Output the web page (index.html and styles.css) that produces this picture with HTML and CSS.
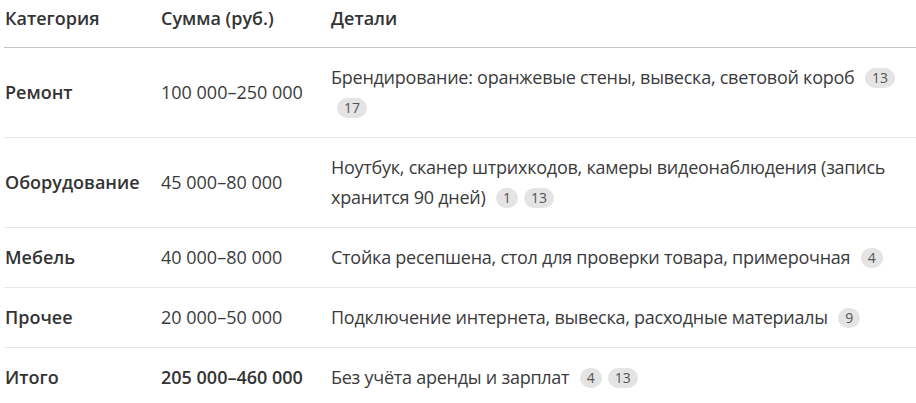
FILE: index.html
```html
<!DOCTYPE html>
<html lang="ru">
<head>
<meta charset="utf-8">
<link rel="stylesheet" href="styles.css">
</head>
<body>
<table class="budget">
  <colgroup>
    <col class="c-cat"><col class="c-sum"><col class="c-det">
  </colgroup>
  <thead>
    <tr><th>Категория</th><th>Сумма (руб.)</th><th>Детали</th></tr>
  </thead>
  <tbody>
    <tr>
      <td class="cat">Ремонт</td>
      <td>100 000–250 000</td>
      <td class="det">Брендирование: оранжевые стены, вывеска, световой короб <span class="ref">13</span> <span class="ref">17</span></td>
    </tr>
    <tr>
      <td class="cat">Оборудование</td>
      <td>45 000–80 000</td>
      <td class="det">Ноутбук, сканер штрихкодов, камеры видеонаблюдения (запись хранится 90 дней) <span class="ref">1</span><span class="ref">13</span></td>
    </tr>
    <tr>
      <td class="cat">Мебель</td>
      <td>40 000–80 000</td>
      <td class="det">Стойка ресепшена, стол для проверки товара, примерочная <span class="ref">4</span></td>
    </tr>
    <tr>
      <td class="cat">Прочее</td>
      <td>20 000–50 000</td>
      <td class="det">Подключение интернета, вывеска, расходные материалы <span class="ref">9</span></td>
    </tr>
    <tr class="total">
      <td class="cat">Итого</td>
      <td class="cat">205 000–460 000</td>
      <td class="det">Без учёта аренды и зарплат <span class="ref">4</span><span class="ref">13</span></td>
    </tr>
  </tbody>
</table>
</body>
</html>
```

FILE: styles.css
```css
html, body {
  margin: 0;
  padding: 0;
  background: #fff;
}
body {
  font-family: "Open Sans", "Noto Sans", sans-serif;
  font-size: 18px;
  color: #3b3b3b;
}
.budget {
  margin-left: 4px;
  width: 912px;
  border-collapse: collapse;
  table-layout: fixed;
}
.c-cat { width: 156px; }
.c-sum { width: 170px; }
.budget th {
  text-align: left;
  font-weight: 600;
  color: #333;
  line-height: 30px;
  padding: 3px 0 14px 1px;
  border-bottom: 1px solid #c4c4c4;
}
.budget td {
  line-height: 30px;
  padding: 14px 0 15px 1px;
  vertical-align: middle;
  border-bottom: 1px solid #e6e6e6;
}
.budget tr:last-child td { border-bottom: none; }
.budget td.cat {
  font-weight: 600;
  color: #333;
}
.budget td.det {
  letter-spacing: -0.25px;
  padding-right: 12px;
}
.ref {
  display: inline-block;
  min-width: 20px;
  height: 20px;
  line-height: 20px;
  padding: 0 7px;
  margin-left: 6px;
  box-sizing: border-box;
  border-radius: 10px;
  background: #e4e4e4;
  color: #555;
  font-size: 14px;
  letter-spacing: 0;
  text-align: center;
  vertical-align: 1px;
}
.ref + .ref { margin-left: 6px; }
```
